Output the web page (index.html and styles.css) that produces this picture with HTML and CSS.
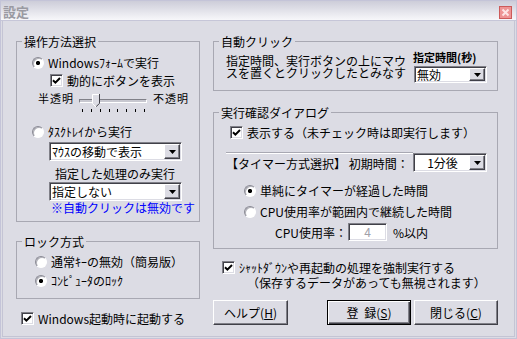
FILE: index.html
```html
<!DOCTYPE html>
<html lang="ja">
<head>
    <meta charset="UTF-8">
    <title>設定</title>
    <link rel="stylesheet" href="styles.css">
</head>
<body>
    <div class="window">
        <div class="titlebar">
            <span class="title">設定</span>
            <span class="close-btn">
                <svg width="11" height="11" viewBox="0 0 11 11"><path d="M2.5 2.5 L8.5 8.5 M8.5 2.5 L2.5 8.5" stroke="#fde4e4" stroke-width="2"/></svg>
            </span>
        </div>
        <div class="client">
            <div class="col-left">
                <fieldset class="group group-mode">
                    <legend>操作方法選択</legend>
                    <div class="row opt-form"><span class="radio on"></span>Windowsﾌｫｰﾑで実行</div>
                    <div class="row opt-dynamic"><span class="check"><svg width="9" height="9" viewBox="0 0 9 9"><path d="M1 4.2 L3.4 6.6 L8 2" fill="none" stroke="#000" stroke-width="2"/></svg></span>動的にボタンを表示</div>
                    <div class="opacity">
                        <span class="opacity-label">半透明</span>
                        <div class="slider">
                            <div class="track"></div>
                            <svg class="thumb" width="8" height="13" viewBox="0 0 8 13">
                                <path d="M0 0 H8 V9 L4 13 L0 9 Z" fill="#dcdce4"/>
                                <path d="M0.5 9.5 V0.5 H7" fill="none" stroke="#fff"/>
                                <path d="M7.5 0 V9.3 L4 12.8" fill="none" stroke="#404048"/>
                                <path d="M0.5 9.5 L4 13" fill="none" stroke="#fff"/>
                            </svg>
                            <div class="ticks"><i></i><i></i><i></i><i></i><i></i><i></i><i></i><i></i></div>
                        </div>
                        <span class="opacity-label">不透明</span>
                    </div>
                    <div class="row opt-tray"><span class="radio"></span>ﾀｽｸﾄﾚｲから実行</div>
                    <div class="combo combo-tray">
                        <span class="combo-text">ﾏｳｽの移動で表示</span>
                        <span class="combo-btn"><svg width="7" height="4" viewBox="0 0 7 4"><path d="M0 0 H7 L3.5 4 Z"/></svg></span>
                    </div>
                    <div class="only-label">指定した処理のみ実行</div>
                    <div class="combo combo-only">
                        <span class="combo-text">指定しない</span>
                        <span class="combo-btn"><svg width="7" height="4" viewBox="0 0 7 4"><path d="M0 0 H7 L3.5 4 Z"/></svg></span>
                    </div>
                    <div class="note">※自動クリックは無効です</div>
                </fieldset>

                <fieldset class="group group-lock">
                    <legend>ロック方式</legend>
                    <div class="row lock-key"><span class="radio"></span>通常ｷｰの無効（簡易版）</div>
                    <div class="row lock-pc"><span class="radio on"></span>ｺﾝﾋﾟｭｰﾀのﾛｯｸ</div>
                </fieldset>

                <div class="row opt-startup"><span class="check"><svg width="9" height="9" viewBox="0 0 9 9"><path d="M1 4.2 L3.4 6.6 L8 2" fill="none" stroke="#000" stroke-width="2"/></svg></span>Windows起動時に起動する</div>
            </div>

            <div class="col-right">
                <fieldset class="group group-click">
                    <legend>自動クリック</legend>
                    <div class="click-body">
                        <div class="click-text">指定時間、実行ボタンの上にマウ<br>スを置くとクリックしたとみなす</div>
                        <div class="click-time">
                            <div class="time-label">指定時間(秒)</div>
                            <div class="combo combo-sec">
                                <span class="combo-text">無効</span>
                                <span class="combo-btn"><svg width="7" height="4" viewBox="0 0 7 4"><path d="M0 0 H7 L3.5 4 Z"/></svg></span>
                            </div>
                        </div>
                    </div>
                </fieldset>

                <fieldset class="group group-confirm">
                    <legend>実行確認ダイアログ</legend>
                    <div class="row opt-show"><span class="check"><svg width="9" height="9" viewBox="0 0 9 9"><path d="M1 4.2 L3.4 6.6 L8 2" fill="none" stroke="#000" stroke-width="2"/></svg></span>表示する（未チェック時は即実行します）</div>
                    <div class="timer-row">
                        <div class="timer-label">【タイマー方式選択】 初期時間：</div>
                        <div class="combo combo-min">
                            <span class="combo-text">1分後</span>
                            <span class="combo-btn"><svg width="7" height="4" viewBox="0 0 7 4"><path d="M0 0 H7 L3.5 4 Z"/></svg></span>
                        </div>
                    </div>
                    <div class="row timer-simple"><span class="radio on"></span>単純にタイマーが経過した時間</div>
                    <div class="row timer-cpu"><span class="radio"></span>CPU使用率が範囲内で継続した時間</div>
                    <div class="cpu-row">
                        <span class="cpu-label">CPU使用率：</span>
                        <span class="cpu-input">4</span>
                        <span class="cpu-unit">%以内</span>
                    </div>
                </fieldset>

                <div class="row opt-force"><span class="check"><svg width="9" height="9" viewBox="0 0 9 9"><path d="M1 4.2 L3.4 6.6 L8 2" fill="none" stroke="#000" stroke-width="2"/></svg></span>ｼｬｯﾄﾀﾞｳﾝや再起動の処理を強制実行する</div>
                <div class="force-note">（保存するデータがあっても無視されます）</div>

                <div class="buttons">
                    <button class="btn btn-help">ヘルプ(<u>H</u>)</button>
                    <button class="btn btn-default btn-save">登 録(<u>S</u>)</button>
                    <button class="btn btn-close">閉じる(<u>C</u>)</button>
                </div>
            </div>
        </div>
    </div>
</body>
</html>
```

FILE: styles.css
```css
body {
    margin: 0;
    font-family: "Noto Sans CJK JP", "Noto Sans", sans-serif;
    font-size: 12px;
    line-height: 13px;
    color: #000;
    background-color: #dcdce4;
}
.window {
    width: 517px;
    height: 339px;
    box-sizing: border-box;
    border: 1px solid #c4c4d8;
    display: flex;
    flex-direction: column;
}
.titlebar {
    height: 19px;
    flex: none;
    border-bottom: 1px solid #c6c6d8;
    background: linear-gradient(#cdcdd9, #f7f7fa);
    display: flex;
    align-items: center;
    justify-content: space-between;
    padding: 0 4px 0 2px;
}
.title {
    font-size: 13px;
    font-weight: bold;
    color: #9a9aa2;
    padding-top: 2px;
}
.close-btn {
    width: 13px;
    height: 13px;
    box-sizing: border-box;
    border: 1px solid #cc5a5a;
    background-color: #ee9494;
    display: flex;
    align-items: center;
    justify-content: center;
    margin-top: 3px;
}
.client {
    flex: 1;
    margin: 0 1px 1px;
    border: 1px solid #c4c4d4;
    border-top: none;
    display: flex;
    gap: 13px;
    padding: 14px 0 0 13px;
}
.col-left {
    width: 184px;
}
.col-right {
    width: 285px;
}

/* group boxes */
.group {
    margin: 0;
    padding: 0 0 7px;
    border: 1px solid #a8a8b2;
    min-width: 0;
}
.group legend {
    padding: 0 2px;
    margin-left: 5px;
    line-height: 13px;
}
.row {
    display: flex;
    align-items: center;
    height: 13px;
    white-space: nowrap;
}
.radio {
    flex: none;
    width: 12px;
    height: 12px;
    box-sizing: border-box;
    border-radius: 50%;
    border: 1px solid;
    border-color: #8a8a94 #fff #fff #8a8a94;
    box-shadow: inset 1px 1px 0 #b0b0b8;
    background: #fff;
    margin-right: 4px;
}
.radio.on {
    background: radial-gradient(circle, #000 0 1.8px, #fff 2.4px);
}
.check {
    flex: none;
    width: 13px;
    height: 13px;
    box-sizing: border-box;
    border: 1px solid;
    border-color: #808088 #fff #fff #808088;
    box-shadow: inset 1px 1px 0 #404048, inset -1px -1px 0 #dcdce4;
    background: #fff;
    display: flex;
    align-items: center;
    justify-content: center;
    margin-right: 4px;
}

/* combo boxes */
.combo {
    height: 19px;
    box-sizing: border-box;
    border: 1px solid;
    border-color: #808088 #fff #fff #808088;
    box-shadow: inset 1px 1px 0 #404048, inset -1px -1px 0 #dcdce4;
    background: #fff;
    display: flex;
    align-items: center;
    padding: 1px;
}
.combo-text {
    flex: 1;
    padding-left: 1px;
    white-space: nowrap;
}
.combo-btn {
    width: 16px;
    height: 15px;
    box-sizing: border-box;
    border: 1px solid;
    border-color: #fff #404048 #404048 #fff;
    box-shadow: inset -1px -1px 0 #808088;
    background: #dcdce4;
    display: flex;
    align-items: center;
    justify-content: center;
}

/* 操作方法選択 */
.opt-form {
    margin: 8px 0 0 15px;
}
.opt-dynamic {
    margin: 5px 0 0 33px;
}
.opacity {
    display: flex;
    margin: 5px 0 0 21px;
    height: 20px;
}
.opacity-label {
    font-size: 11px;
    letter-spacing: 1px;
}
.slider {
    position: relative;
    width: 68px;
    height: 20px;
    margin: 0 6px 0 5px;
}
.track {
    margin-top: 7px;
    height: 2px;
    border: 1px solid;
    border-color: #808088 #fff #fff #808088;
    background: #c8c8d0;
}
.thumb {
    position: absolute;
    left: 13px;
    top: 2px;
}
.ticks {
    display: flex;
    justify-content: space-between;
    margin: 6px 2px 0 3px;
}
.ticks i {
    width: 1px;
    height: 3px;
    background: #000;
}
.opt-tray {
    margin: 13px 0 0 15px;
}
.combo-tray,
.combo-only {
    width: 133px;
    margin-left: 32px;
}
.combo-tray {
    margin-top: 4px;
}
.only-label {
    margin: 6px 0 0 38px;
}
.combo-only {
    margin-top: 2px;
}
.note {
    color: #0000ff;
    margin-left: 34px;
}

/* ロック方式 */
.group-lock {
    margin-top: 13px;
    padding-bottom: 11px;
}
.lock-key {
    margin: 7px 0 0 18px;
}
.lock-pc {
    margin: 6px 0 0 18px;
}
.opt-startup {
    margin: 13px 0 0 5px;
}

/* 自動クリック */
.click-body {
    display: flex;
}
.click-text {
    width: 187px;
    margin: 7px 0 0 12px;
    line-height: 12px;
    white-space: nowrap;
}
.click-time {
    margin-top: 3px;
}
.time-label {
    font-size: 11px;
    font-weight: bold;
}
.combo-sec {
    width: 73px;
    height: 17px;
    margin: 2px 0 0 1px;
}
.combo-sec .combo-btn {
    height: 13px;
}

/* 実行確認ダイアログ */
.group-confirm {
    margin-top: 15px;
}
.opt-show {
    margin: 7px 0 0 16px;
}
.timer-row {
    display: flex;
    align-items: flex-start;
    margin: 13px 0 0 12px;
}
.timer-label {
    width: 187px;
    border-top: 1px solid #a8a8b2;
    box-shadow: inset 0 1px 0 #fff;
    padding-top: 4px;
    white-space: nowrap;
}
.combo-min {
    width: 74px;
    margin-top: 1px;
}
.combo-min .combo-text {
    text-align: center;
}
.timer-simple {
    margin: 12px 0 0 30px;
}
.timer-cpu {
    margin: 8px 0 0 30px;
}
.cpu-row {
    display: flex;
    align-items: center;
    height: 18px;
    margin: 5px 0 0 61px;
}
.cpu-label {
    width: 73px;
}
.cpu-input {
    width: 39px;
    height: 18px;
    box-sizing: border-box;
    border: 1px solid;
    border-color: #808088 #fff #fff #808088;
    box-shadow: inset 1px 1px 0 #404048, inset -1px -1px 0 #dcdce4;
    background: #fff;
    color: #a0a0a8;
    text-align: center;
    line-height: 16px;
}
.cpu-unit {
    margin-left: 6px;
}

/* 下部 */
.opt-force {
    margin: 12px 0 0 9px;
}
.force-note {
    margin: 2px 0 0 34px;
    white-space: nowrap;
}
.buttons {
    display: flex;
    margin-top: 11px;
}
.btn {
    height: 25px;
    box-sizing: border-box;
    border: 1px solid;
    border-color: #fff #404048 #404048 #fff;
    box-shadow: inset -1px -1px 0 #808088;
    background: #dcdce4;
    font: inherit;
    color: #000;
    padding: 0;
}
.btn-help {
    width: 75px;
}
.btn-save {
    width: 84px;
    margin-left: 39px;
    word-spacing: 3px;
}
.btn-default {
    border: 1px solid #000;
    box-shadow: inset 1px 1px 0 #fff, inset -1px -1px 0 #404048, inset -2px -2px 0 #808088;
}
.btn-close {
    width: 84px;
    margin-left: 3px;
}
```
